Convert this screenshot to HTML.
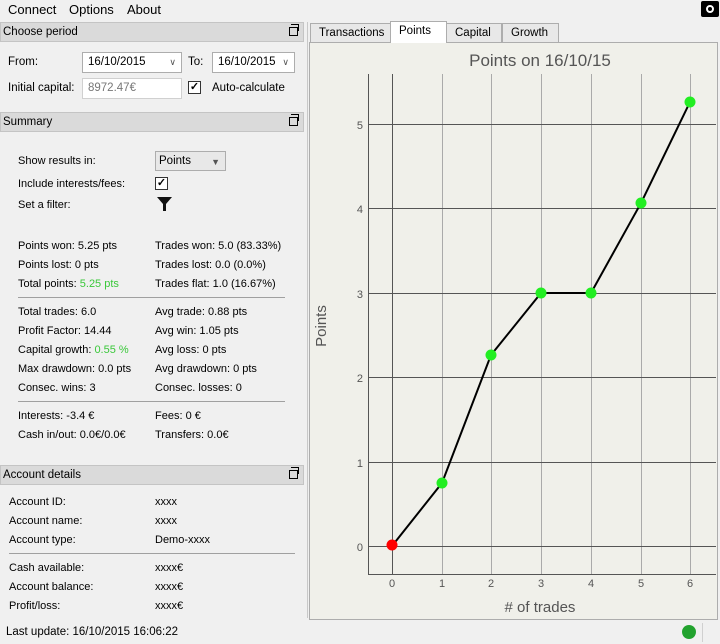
<!DOCTYPE html>
<html><head><meta charset="utf-8"><style>
*{margin:0;padding:0;box-sizing:border-box}
body{width:720px;height:644px;background:#f0f0f0;font-family:"Liberation Sans",sans-serif;font-size:11px;color:#000;position:relative;overflow:hidden}
.a{position:absolute;white-space:nowrap}
.menu{font-size:13px;top:2px}
.dock{position:absolute;left:0;width:304px;height:20px;background:#dadada;border:1px solid #c4c4c4;font-size:11.5px;padding:3px 2px}
.dock .ic{position:absolute;right:5px;top:4px;width:9px;height:9px;border:1.5px solid #000}
.dock .ic:before{content:"";position:absolute;left:1px;top:-4px;width:7px;height:6px;border:1.5px solid #000;border-bottom:none;border-left:none}
.combo{position:absolute;background:#fff;border:1px solid #adadad;height:21px;padding:3px 5px;font-size:11.5px}
.combo i{position:absolute;right:5px;top:4px;font-style:normal;font-size:9px;color:#555}
.cb{position:absolute;width:13px;height:13px;border:1px solid #333;background:#fff;font-size:11px;line-height:11px;text-align:center;font-weight:bold}
.hr{position:absolute;height:1px;background:#a0a0a0}
.g{color:#3ac83a}
.tab{position:absolute;top:23px;height:20px;border:1px solid #adadad;background:#e8e8e8;padding:3px 8px;font-size:11.5px}
</style></head><body>
<div class="a menu" style="left:8px">Connect</div>
<div class="a menu" style="left:69px">Options</div>
<div class="a menu" style="left:127px">About</div>
<div class="a" style="left:701px;top:1px;width:18px;height:16px;background:#000;border-radius:2px"><div style="position:absolute;left:5px;top:4px;width:8px;height:8px;border-radius:50%;border:2px solid #fff"></div></div>

<div class="dock" style="top:22px">Choose period<div class="ic"></div></div>
<div class="a" style="left:8px;top:56px;font-size:11.5px">From:</div>
<div class="combo" style="left:82px;top:52px;width:100px">16/10/2015<i>&#8744;</i></div>
<div class="a" style="left:188px;top:56px;font-size:11.5px">To:</div>
<div class="combo" style="left:212px;top:52px;width:83px">16/10/2015<i>&#8744;</i></div>
<div class="a" style="left:8px;top:82px;font-size:11.5px">Initial capital:</div>
<div class="combo" style="left:82px;top:78px;width:100px;border-color:#d0d0d0;color:#777">8972.47€</div>
<div class="cb" style="left:188px;top:81px">✓</div>
<div class="a" style="left:212px;top:82px;font-size:11.5px">Auto-calculate</div>

<div class="dock" style="top:112px">Summary<div class="ic"></div></div>
<div class="a" style="left:18px;top:155px">Show results in:</div>
<div class="combo" style="left:155px;top:151px;width:71px;height:20px;background:#e8e8e8;padding:3px 3px">Points<i style="top:5px">▼</i></div>
<div class="a" style="left:18px;top:178px">Include interests/fees:</div>
<div class="cb" style="left:155px;top:177px">✓</div>
<div class="a" style="left:18px;top:199px">Set a filter:</div>
<svg class="a" style="left:157px;top:196px" width="16" height="16"><path d="M0 1H15L9 8V15H6V8Z" fill="#111"/></svg>

<div class="a" style="left:18px;top:240px">Points won: 5.25 pts</div>
<div class="a" style="left:155px;top:240px">Trades won: 5.0 (83.33%)</div>
<div class="a" style="left:18px;top:259px">Points lost: 0 pts</div>
<div class="a" style="left:155px;top:259px">Trades lost: 0.0 (0.0%)</div>
<div class="a" style="left:18px;top:278px">Total points: <span class="g">5.25 pts</span></div>
<div class="a" style="left:155px;top:278px">Trades flat: 1.0 (16.67%)</div>
<div class="hr" style="left:18px;top:297px;width:267px"></div>
<div class="a" style="left:18px;top:306px">Total trades: 6.0</div>
<div class="a" style="left:155px;top:306px">Avg trade: 0.88 pts</div>
<div class="a" style="left:18px;top:325px">Profit Factor: 14.44</div>
<div class="a" style="left:155px;top:325px">Avg win: 1.05 pts</div>
<div class="a" style="left:18px;top:344px">Capital growth: <span class="g">0.55 %</span></div>
<div class="a" style="left:155px;top:344px">Avg loss: 0 pts</div>
<div class="a" style="left:18px;top:363px">Max drawdown: 0.0 pts</div>
<div class="a" style="left:155px;top:363px">Avg drawdown: 0 pts</div>
<div class="a" style="left:18px;top:382px">Consec. wins: 3</div>
<div class="a" style="left:155px;top:382px">Consec. losses: 0</div>
<div class="hr" style="left:18px;top:401px;width:267px"></div>
<div class="a" style="left:18px;top:410px">Interests: -3.4 €</div>
<div class="a" style="left:155px;top:410px">Fees: 0 €</div>
<div class="a" style="left:18px;top:429px">Cash in/out: 0.0€/0.0€</div>
<div class="a" style="left:155px;top:429px">Transfers: 0.0€</div>

<div class="dock" style="top:465px">Account details<div class="ic"></div></div>
<div class="a" style="left:9px;top:496px">Account ID:</div><div class="a" style="left:155px;top:496px">xxxx</div>
<div class="a" style="left:9px;top:515px">Account name:</div><div class="a" style="left:155px;top:515px">xxxx</div>
<div class="a" style="left:9px;top:534px">Account type:</div><div class="a" style="left:155px;top:534px">Demo-xxxx</div>
<div class="hr" style="left:9px;top:553px;width:286px"></div>
<div class="a" style="left:9px;top:562px">Cash available:</div><div class="a" style="left:155px;top:562px">xxxx€</div>
<div class="a" style="left:9px;top:581px">Account balance:</div><div class="a" style="left:155px;top:581px">xxxx€</div>
<div class="a" style="left:9px;top:600px">Profit/loss:</div><div class="a" style="left:155px;top:600px">xxxx€</div>
<div class="a" style="left:6px;top:626px;font-size:11.5px">Last update: 16/10/2015 16:06:22</div>
<div class="a" style="left:307px;top:22px;width:1px;height:596px;background:#c8c8c8"></div>

<div class="tab" style="left:310px;width:81px">Transactions</div>
<div class="tab" style="left:446px;width:56px">Capital</div>
<div class="tab" style="left:502px;width:57px">Growth</div>
<div class="a" style="left:309px;top:42px;width:409px;height:578px;border:1px solid #adadad;background:#f0f0ea"></div>
<div class="tab" style="left:390px;top:21px;width:57px;height:22px;background:#fff;border-bottom:none;z-index:2">Points</div>

<svg class="a" style="left:0;top:0" width="720" height="644">
<text x="540" y="66" text-anchor="middle" font-family="Liberation Sans" font-size="17" fill="#555">Points on 16/10/15</text>
<g stroke="#aaa" stroke-width="1">
<line x1="442.5" y1="74" x2="442.5" y2="574"/><line x1="491.5" y1="74" x2="491.5" y2="574"/><line x1="541.5" y1="74" x2="541.5" y2="574"/><line x1="591.5" y1="74" x2="591.5" y2="574"/><line x1="641.5" y1="74" x2="641.5" y2="574"/><line x1="690.5" y1="74" x2="690.5" y2="574"/>
</g>
<g stroke="#555" stroke-width="1">
<line x1="392.5" y1="74" x2="392.5" y2="574"/>
<line x1="369" y1="124.5" x2="716" y2="124.5"/><line x1="369" y1="208.5" x2="716" y2="208.5"/><line x1="369" y1="293.5" x2="716" y2="293.5"/><line x1="369" y1="377.5" x2="716" y2="377.5"/><line x1="369" y1="462.5" x2="716" y2="462.5"/><line x1="369" y1="546.5" x2="716" y2="546.5"/>
<line x1="368.5" y1="74" x2="368.5" y2="574"/><line x1="368" y1="574.5" x2="716" y2="574.5"/>
</g>
<g font-family="Liberation Sans" font-size="11" fill="#555" text-anchor="end">
<text x="363" y="129">5</text><text x="363" y="213">4</text><text x="363" y="298">3</text><text x="363" y="382">2</text><text x="363" y="467">1</text><text x="363" y="551">0</text>
</g>
<g font-family="Liberation Sans" font-size="11" fill="#555" text-anchor="middle">
<text x="392" y="587">0</text><text x="442" y="587">1</text><text x="491" y="587">2</text><text x="541" y="587">3</text><text x="591" y="587">4</text><text x="641" y="587">5</text><text x="690" y="587">6</text>
</g>
<text x="540" y="612" text-anchor="middle" font-family="Liberation Sans" font-size="15" fill="#555"># of trades</text>
<text transform="translate(326,326) rotate(-90)" text-anchor="middle" font-family="Liberation Sans" font-size="15" fill="#555">Points</text>
<polyline points="392,546 442,483 491,355 541,293 591,293 641,203 690,102" fill="none" stroke="#000" stroke-width="2"/>
<g fill="#22ee22"><circle cx="442" cy="483" r="5.5"/><circle cx="491" cy="355" r="5.5"/><circle cx="541" cy="293" r="5.5"/><circle cx="591" cy="293" r="5.5"/><circle cx="641" cy="203" r="5.5"/><circle cx="690" cy="102" r="5.5"/></g>
<circle cx="392" cy="545" r="5.5" fill="#f00"/>
<circle cx="689" cy="632" r="7" fill="#22a22e"/>
<line x1="702.5" y1="623" x2="702.5" y2="642" stroke="#d0d0d0"/>
</svg>
</body></html>
